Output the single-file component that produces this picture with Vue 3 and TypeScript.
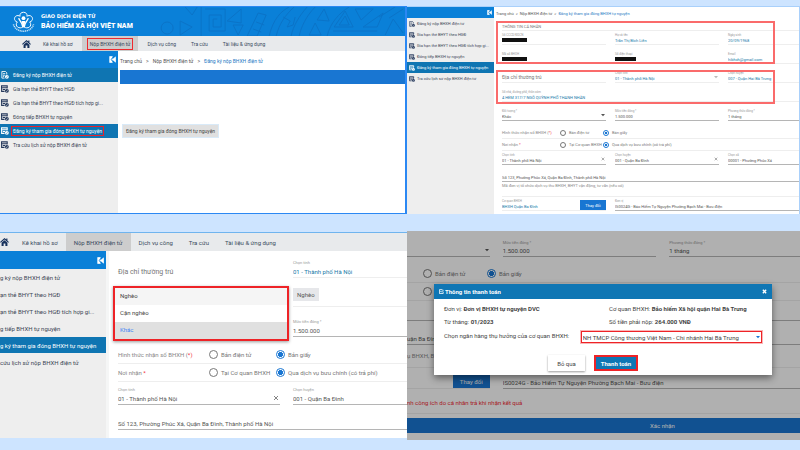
<script setup lang="ts">
import { reactive } from 'vue'

type Kind = 'heading' | 'input' | 'select' | 'redacted' | 'note' | 'warn' | 'chip' | 'office' | 'radios' | 'blank'

interface Cell {
  kind: Kind
  label?: string
  value?: string
  tone?: string
  wide?: boolean
  mark?: string
  options?: string[]
}

interface Row {
  size: string
  cells: Cell[]
}

interface Panel {
  id: string
  banner?: boolean
  nav?: boolean
  side?: string[]
  active?: number[]
  crumbs?: string[]
  sections: Row[][]
}

const menu = ['Kê khai hồ sơ', 'Nộp BHXH điện tử', 'Dịch vụ công', 'Tra cứu', 'Tài liệu & ứng dụng']
const sideItems = [
  'Đăng ký nộp BHXH điện tử',
  'Gia hạn thẻ BHYT theo HGĐ',
  'Gia hạn thẻ BHYT theo HGĐ tích hợp gi...',
  'Đóng tiếp BHXH tự nguyện',
  'Đăng ký tham gia đóng BHXH tự nguyện',
  'Tra cứu lịch sử nộp BHXH điện tử',
]
const sideItemsCropped = [
  'g ký nộp BHXH điện tử',
  'ạn thẻ BHYT theo HGĐ',
  'ạn thẻ BHYT theo HGĐ tích hợp gi...',
  'g tiếp BHXH tự nguyện',
  'g ký tham gia đóng BHXH tự nguyện',
  'cứu lịch sử nộp BHXH điện tử',
]

const receive: Cell = { kind: 'radios', label: 'Hình thức nhận sổ BHXH (', mark: '*)', options: ['Bản điện tử', 'Bản giấy'] }
const place: Cell = { kind: 'radios', label: 'Nơi nhận ', mark: '*', options: ['Tại Cơ quan BHXH', 'Qua dịch vụ bưu chính (có trả phí)'] }

const panels = reactive<Panel[]>([
  {
    id: 'start',
    banner: true,
    nav: true,
    side: sideItems,
    active: [0, 4],
    crumbs: ['Trang chủ', 'Nộp BHXH điện tử', 'Đăng ký nộp BHXH điện tử'],
    sections: [],
  },
  {
    id: 'form',
    side: sideItems,
    active: [4],
    crumbs: ['Trang chủ', 'Nộp BHXH điện tử', 'Đăng ký tham gia đóng BHXH tự nguyện'],
    sections: [
      [
        { size: 'head', cells: [{ kind: 'heading', value: 'THÔNG TIN CÁ NHÂN', wide: true }] },
        {
          size: 'short',
          cells: [
            { kind: 'redacted', label: 'Số CCCD/ĐDCN' },
            { kind: 'input', label: 'Họ và tên', value: 'Trần Thị Bích Liên', tone: 'blue' },
            { kind: 'input', label: 'Ngày sinh', value: '20/09/1968', tone: 'blue' },
          ],
        },
        {
          size: 'field',
          cells: [
            { kind: 'redacted', label: 'Mã số BHXH' },
            { kind: 'redacted', label: 'Số điện thoại' },
            { kind: 'input', label: 'Email', value: 'hibhxh@gmail.com', tone: 'blue' },
          ],
        },
      ],
      [
        {
          size: 'field',
          cells: [
            { kind: 'heading', value: 'Địa chỉ thường trú' },
            { kind: 'select', label: 'Chọn tỉnh', value: '01 - Thành phố Hà Nội', tone: 'blue faint' },
            { kind: 'input', label: 'Chọn huyện', value: '007 - Quận Hai Bà Trưng', tone: 'blue' },
          ],
        },
        {
          size: 'field',
          cells: [{ kind: 'input', label: 'Số nhà, đường phố, thôn xóm', value: '4 HẺM 317/7 NGÕ QUỲNH PHỐ THANH NHÀN', tone: 'blue', wide: true }],
        },
      ],
      [
        {
          size: 'field',
          cells: [
            { kind: 'select', label: 'Đối tượng *', value: 'Khác', tone: 'solid' },
            { kind: 'input', label: 'Mức tiền đóng *', value: '1.500.000', tone: 'solid' },
            { kind: 'input', label: 'Phương thức đóng *', value: '1 tháng', tone: 'solid' },
          ],
        },
        { size: 'pick-first', cells: [{ ...receive, wide: true }] },
        { size: 'pick', cells: [{ ...place, wide: true }] },
        {
          size: 'short',
          cells: [
            { kind: 'select', label: 'Chọn tỉnh', value: '01 - Thành phố Hà Nội', tone: 'solid cross' },
            { kind: 'select', label: 'Chọn huyện', value: '001 - Quận Ba Đình', tone: 'solid cross' },
            { kind: 'input', label: 'Chọn xã', value: '00001 - Phường Phúc Xá', tone: 'solid' },
          ],
        },
        { size: 'address', cells: [{ kind: 'input', value: 'Số 123, Phường Phúc Xá, Quận Ba Đình, Thành phố Hà Nội', tone: 'solid', wide: true }] },
        { size: 'note', cells: [{ kind: 'note', value: 'Mã đơn vị tổ chức dịch vụ thu BHXH, BHYT vận động, tư vấn (nếu có)', wide: true }] },
        {
          size: 'short',
          cells: [
            { kind: 'office', label: 'Cơ quan BHXH', value: 'BHXH Quận Ba Đình', tone: 'blue' },
            { kind: 'input', label: 'Đơn vị', value: 'IS0024G - Bảo Hiểm Tự Nguyện Phường Bạch Mai - Bưu điện', tone: 'solid', wide: true },
          ],
        },
      ],
    ],
  },
  {
    id: 'choice',
    nav: true,
    side: sideItemsCropped,
    active: [4],
    sections: [
      [
        {
          size: 'top',
          cells: [
            { kind: 'heading', value: 'Địa chỉ thường trú' },
            { kind: 'input', label: 'Chọn tỉnh', value: '01 - Thành phố Hà Nội', tone: 'blue' },
          ],
        },
        { size: 'tag', cells: [{ kind: 'blank' }, { kind: 'chip', value: 'Nghèo' }] },
        { size: 'money', cells: [{ kind: 'blank' }, { kind: 'input', label: 'Mức tiền đóng *', value: '1.500.000', tone: 'solid' }] },
        { size: 'pick-first', cells: [{ ...receive, wide: true }] },
        { size: 'pick', cells: [{ ...place, wide: true }] },
        {
          size: 'field',
          cells: [
            { kind: 'select', label: 'Chọn tỉnh', value: '01 - Thành phố Hà Nội', tone: 'solid cross' },
            { kind: 'input', label: 'Chọn huyện', value: '001 - Quận Ba Đình', tone: 'solid' },
          ],
        },
        { size: 'address', cells: [{ kind: 'input', value: 'Số 123, Phường Phúc Xá, Quận Ba Đình, Thành phố Hà Nội', tone: 'solid', wide: true }] },
      ],
    ],
  },
  {
    id: 'payment',
    sections: [
      [
        {
          size: 'top',
          cells: [
            { kind: 'select', value: '', tone: 'solid' },
            { kind: 'input', label: 'Mức tiền đóng *', value: '1.500.000', tone: 'solid' },
            { kind: 'input', label: 'Phương thức đóng *', value: '1 tháng', tone: 'solid' },
          ],
        },
        { size: 'pick-first', cells: [{ kind: 'radios', options: ['Bản điện tử', 'Bản giấy'], wide: true }] },
        { size: 'pick', cells: [{ kind: 'radios', options: [''], wide: true }] },
        { size: 'field', cells: [{ kind: 'blank', tone: 'solid' }, { kind: 'blank', tone: 'solid' }, { kind: 'blank', tone: 'solid' }] },
        { size: 'address', cells: [{ kind: 'input', value: 'uận Ba Đình', tone: 'solid', wide: true }] },
        { size: 'note', cells: [{ kind: 'note', value: 'ụ BHXH, BHYT', wide: true }] },
        {
          size: 'office-row',
          cells: [
            { kind: 'office' },
            { kind: 'input', value: 'IS0024G - Bảo Hiểm Tự Nguyện Phường Bạch Mai - Bưu điện', tone: 'solid', wide: true },
          ],
        },
        { size: 'warning', cells: [{ kind: 'warn', value: 'nh công ích do cá nhân trả khi nhận kết quả', wide: true }] },
      ],
    ],
  },
])

const objects = ['Nghèo', 'Cận nghèo', 'Khác']
const key = (...parts: (string | number)[]) => parts.join('-')
const checked = (options: string[], i: number) => i === 1 && options.length > 1
</script>

<template>
  <main class="board">
    <section v-for="p in panels" :key="p.id" class="panel" :class="p.id">
      <header v-if="p.banner" class="banner">
        <svg class="logo" viewBox="0 0 24 24" aria-hidden="true">
          <g fill="none" stroke="#fff" stroke-width="1">
            <path d="M8.500 6.500C7 1 17 1 15.500 6.500C21 3.500 24 11 18.500 12.500C22 17 16 20.500 12.500 17.500H11.500C8 20.500 2 17 5.500 12.500C0 11 3 3.500 8.500 6.500Z" />
            <path d="M7 8.500C8 12 10.500 12 11.300 18M17 8.500C16 12 13.500 12 12.700 18" stroke-width="1.400" />
            <path d="M1.500 15C4 24.500 20 24.500 22.500 15" stroke-dasharray="1.200 .7" stroke-width="1.600" opacity=".8" />
          </g>
          <circle cx="12" cy="8.500" r="2" fill="#fff" />
          <path d="M10 11.500h4l-1.300 6h-1.400z" fill="#fff" />
        </svg>
        <div class="brand">
          <span class="brand-sub">GIAO DỊCH ĐIỆN TỬ</span>
          <h1>BẢO HIỂM XÃ HỘI VIỆT NAM</h1>
        </div>
        <svg class="pattern" viewBox="0 0 256 29" preserveAspectRatio="xMaxYMid slice" aria-hidden="true">
          <g fill="none" stroke="#0a6cbe" stroke-width="1" opacity=".6">
            <circle cx="18" cy="21" r="6" />
            <path d="M31 14l12 6-12 8zM36 0l7 8 5-8M52 0v29M56 2h20v22H60V8h12v12h-8v-8h4" />
            <path d="M78 14l14-12v14zM84 18h10l-5 10zM98 29L109 6l8 2-9 21zM104 22l8 3M107 15l8 3" />
            <path d="M120 29C124 12 132 4 140 0M127 29c3-12 9-21 18-29M134 10l7 4-3 6 6-2 2-8M142 29c2-10 8-20 16-29M150 29c2-9 7-20 16-29" />
            <path d="M160 28l6-12 6 12zM168 13l7-11 5 12zM185 20L196 4l8 16zM190 18l6-9 4 9zM206 2h18l-12 11zM214 20h14l6-14z" />
            <path d="M178 29c3-13 12-23 22-29M184 24h44M236 28l8-16 10 14M230 10L246 0M240 11l14-9" />
          </g>
        </svg>
      </header>

      <nav v-if="p.nav" class="topnav" aria-label="Menu chính">
        <a href="#" class="home" aria-label="Trang chủ">
          <svg viewBox="0 0 10 9"><path d="M5 0L0 4.500l.8.8L5 1.600l4.200 3.700.8-.8L8.300 3V.7H7V1.800zM5 2.500L1.700 5.400V9H4V6.300h2V9h2.300V5.400z" fill="#16315c" /></svg>
        </a>
        <a v-for="(m, i) in menu" :key="m" href="#" :class="{ current: i === 1 }"><span>{{ m }}</span></a>
      </nav>

      <div class="body">
        <aside v-if="p.side" class="sidebar">
          <div class="side-top">
            <button type="button" class="collapse" aria-label="Thu gọn">
              <svg viewBox="0 0 8 8"><path d="M4 .5H.8v7H4M7.500 1L4 4l3.500 3z" fill="#fff" stroke="#fff" stroke-width=".8" /><path d="M4.200 1.500L2.600 4l1.600 2.500" fill="none" stroke="#0a80d8" stroke-width="1" /></svg>
            </button>
          </div>
          <a v-for="(s, i) in p.side" :key="s" href="#" class="side-item" :class="{ active: p.active?.includes(i) }">
            <svg v-if="p.id !== 'choice'" class="side-icon" viewBox="0 0 9 9" aria-hidden="true">
              <path v-if="i === 0" d="M1 .5h4l1.500 1.500v2M1 .5v7.500h3M2.300 3h2.500M2.300 4.800h2M2.300 6.300h1.200" fill="none" stroke="currentColor" />
              <path v-else d="M.5 1h6.500v2h-6.500zM.7 3v4.200h3.300M2 5h2.500M6.800 3v1" fill="none" stroke="currentColor" stroke-width="1.200" />
              <circle cx="6.600" cy="6.600" r="2.200" fill="currentColor" />
              <path class="tick" d="M5.600 6.600l.8.8 1.300-1.500" fill="none" stroke-width=".6" />
            </svg>
            <span>{{ s }}</span>
          </a>
        </aside>

        <div class="content">
          <nav v-if="p.crumbs" class="crumbs" aria-label="Đường dẫn">
            <template v-for="(c, i) in p.crumbs" :key="c"><i v-if="i">&gt;</i><a href="#">{{ c }}</a></template>
          </nav>

          <template v-if="p.id === 'start'">
            <div class="strip"></div>
            <button type="button" class="join">Đăng ký tham gia đóng BHXH tự nguyện</button>
          </template>

          <form v-else @submit.prevent>
            <div v-for="(rows, si) in p.sections" :key="si" class="section">
              <div v-for="(r, ri) in rows" :key="ri" class="row" :class="r.size">
                <div v-for="(c, ci) in r.cells" :key="ci" class="cell" :class="[c.kind, c.tone, { wide: c.wide }]">
                  <h2 v-if="c.kind === 'heading'">{{ c.value }}</h2>
                  <p v-else-if="c.kind === 'note' || c.kind === 'warn'">{{ c.value }}</p>
                  <button v-else-if="c.kind === 'chip'" type="button">{{ c.value }}</button>
                  <template v-else-if="c.kind === 'redacted'">
                    <span class="label">{{ c.label }}</span><span class="redaction"></span>
                  </template>
                  <template v-else-if="c.kind === 'input'">
                    <label v-if="c.label" :for="key(p.id, si, ri, ci)">{{ c.label }}</label>
                    <input :id="key(p.id, si, ri, ci)" v-model="c.value" type="text" />
                  </template>
                  <template v-else-if="c.kind === 'select'">
                    <label v-if="c.label" :for="key(p.id, si, ri, ci)">{{ c.label }}</label>
                    <select :id="key(p.id, si, ri, ci)"><option>{{ c.value }}</option></select>
                    <svg v-if="c.tone?.includes('cross')" class="caret" viewBox="0 0 6 6"><path d="M1 1l4 4M5 1L1 5" stroke="#777" stroke-width=".9" /></svg>
                    <svg v-else class="caret" viewBox="0 0 6 6"><path d="M0 1.500h6L3 4.800z" fill="#555" /></svg>
                  </template>
                  <template v-else-if="c.kind === 'office'">
                    <div v-if="c.label" class="office-text">
                      <label :for="key(p.id, si, ri, ci)">{{ c.label }}</label>
                      <input :id="key(p.id, si, ri, ci)" v-model="c.value" type="text" />
                    </div>
                    <button type="button" class="change">Thay đổi</button>
                  </template>
                  <template v-else-if="c.kind === 'radios'">
                    <span class="question">{{ c.label }}<b>{{ c.mark }}</b></span>
                    <label v-for="(o, oi) in c.options" :key="oi" class="radio">
                      <input type="radio" :name="key(p.id, ri)" :checked="checked(c.options ?? [], oi)" />
                      <span>{{ o }}</span>
                    </label>
                  </template>
                </div>
              </div>
            </div>
            <ul v-if="p.id === 'choice'" class="menu" role="listbox" aria-label="Đối tượng">
              <li v-for="o in objects" :key="o" role="option" :aria-selected="o === 'Khác'">{{ o }}</li>
            </ul>
            <button v-if="p.id === 'payment'" type="submit" class="confirm">Xác nhận</button>
          </form>
        </div>
      </div>

      <div v-if="p.id === 'payment'" class="backdrop">
        <div class="dialog" role="dialog" aria-labelledby="pay-title">
          <div class="dialog-head">
            <svg viewBox="0 0 6 6" aria-hidden="true"><path d="M5 3.200V5.500H.5V.8H4.200M1.600 2.500l1.300 1.300L5.600 1" fill="none" stroke="#fff" stroke-width="1" /></svg>
            <h2 id="pay-title">Thông tin thanh toán</h2>
            <button type="button" aria-label="Đóng"><svg viewBox="0 0 6 6"><path d="M1 1l4 4M5 1L1 5" stroke="#fff" stroke-width="1.600" /></svg></button>
          </div>
          <div class="dialog-body">
            <div class="facts">
              <p>Đơn vị: <b>Đơn vị BHXH tự nguyện DVC</b></p>
              <p>Cơ quan BHXH: <b>Bảo hiểm Xã hội quận Hai Bà Trưng</b></p>
              <p>Từ tháng: <b>01/2023</b></p>
              <p>Số tiền phải nộp: <b>264.000 VNĐ</b></p>
            </div>
            <div class="bank">
              <label for="bank">Chọn ngân hàng thụ hưởng của cơ quan BHXH:</label>
              <div class="bank-box">
                <select id="bank"><option>NH TMCP Công thương Việt Nam - Chi nhánh Hai Bà Trưng</option></select>
                <svg viewBox="0 0 6 6"><path d="M0 1.500h6L3 4.800z" fill="#1976d2" /></svg>
              </div>
            </div>
            <div class="actions">
              <button type="button" class="skip">Bỏ qua</button>
              <button type="button" class="pay">Thanh toán</button>
            </div>
          </div>
        </div>
      </div>
    </section>
  </main>
</template>

<style>
body {
  margin: 0;
  background: #cde4ff;
}
</style>

<style scoped>
* {
  box-sizing: border-box;
}
.board {
  display: grid;
  grid-template-columns: 407fr 393fr;
  row-gap: 17px;
  padding: 6px 0 10px;
  font-family: Roboto, "Liberation Sans", sans-serif;
  background: #cde4ff;
  color: #555;
}
h1, h2, p, ul {
  margin: 0;
  padding: 0;
  font-weight: 400;
  font-size: inherit;
}
a {
  color: inherit;
  text-decoration: none;
}
button, input, select {
  margin: 0;
  padding: 0;
  border: 0;
  border-radius: 0;
  font: inherit;
  color: inherit;
  background: none;
  appearance: none;
}
svg {
  display: block;
}
.panel {
  position: relative;
  display: flex;
  flex-direction: column;
  min-width: 0;
  overflow: hidden;
  background: #fff;
}
.start {
  --side: 118px;
  --side-font: 5px;
  border: solid #2b88f3;
  border-width: 1px 2px 1px 0;
  font-size: 5px;
}
.form {
  --side: 87px;
  --side-font: 4px;
  --label: 3px;
  --value: 4px;
  --label-line: 4px;
  --value-line: 7px;
  --cols: 104fr 104fr 71fr;
  --gap: 9px;
  --q: 58px;
  --first: 43px;
  --dot: 6px;
  --pick: 12px;
  border: solid #a9d0fb;
  border-width: 1px 1px 0 0;
  font-size: 4px;
}
.choice {
  --side: 106px;
  --side-font: 6px;
  --label: 4px;
  --value: 6px;
  --label-line: 6px;
  --value-line: 11px;
  --cols: 162fr 114fr;
  --gap: 13px;
  --q: 91px;
  --first: 67px;
  --dot: 9px;
  --pick: 18px;
  margin: 1px 0 2px;
  border-top: 1px solid #6fb4ee;
  font-size: 6px;
}
.payment {
  --label: 4px;
  --value: 6px;
  --label-line: 6px;
  --value-line: 10px;
  --cols: 83fr 154fr 131fr;
  --gap: 13px;
  --q: 16px;
  --first: 64px;
  --dot: 9px;
  --pick: 18px;
  font-size: 6px;
}

/* banner */
.banner {
  position: relative;
  display: flex;
  align-items: center;
  gap: 6px;
  height: 29px;
  padding-left: 12px;
  background: #0a80d8;
  color: #fff;
}
.logo {
  width: 23px;
  height: 23px;
}
.brand {
  position: relative;
  z-index: 1;
}
.brand-sub {
  display: block;
  font: 700 5px/9px "DejaVu Sans", sans-serif;
}
.brand h1 {
  font-size: 7px;
  font-weight: 900;
  line-height: 10px;
  white-space: nowrap;
}
.pattern {
  position: absolute;
  top: 0;
  right: 0;
  width: 63%;
  height: 29px;
}

/* top navigation */
.topnav {
  display: flex;
  align-items: stretch;
  height: 15px;
  background: #e8eaec;
  color: #3a4a60;
}
.topnav a {
  display: flex;
  align-items: center;
  padding: 0 7px;
  white-space: nowrap;
}
.topnav .home {
  padding: 0 5px 0 22px;
}
.home svg {
  width: 9px;
  height: 8px;
}
.topnav .current {
  background: #cdcdcd;
}
.start .topnav .current {
  margin: 0 1px 0 2px;
  padding: 0 5px;
}
.start .current span {
  padding: 2px;
  border: 1px solid #ee2a2f;
}
.start .current ~ a {
  padding: 0 7px 0 8px;
}
.choice .topnav {
  height: 18px;
}
.choice .topnav a {
  padding: 0 8px;
}
.choice .topnav .home {
  padding: 0 5px 0 0;
}

/* sidebar */
.body {
  display: flex;
  flex: 1;
  min-width: 0;
}
.sidebar {
  flex: none;
  width: var(--side);
  background: #eee;
  color: #3c4656;
  font-size: var(--side-font);
  overflow: hidden;
}
.side-top {
  display: flex;
  justify-content: flex-end;
  align-items: center;
  height: 17px;
  padding-right: 2px;
  background: #0a80d8;
}
.collapse svg {
  width: 7px;
  height: 7px;
}
.side-item {
  display: flex;
  align-items: center;
  gap: 4px;
  height: 14px;
  padding-left: 1px;
  white-space: nowrap;
}
.side-icon {
  flex: none;
  width: 8px;
  height: 8px;
  color: #26395c;
}
.tick {
  stroke: #fff;
}
.side-item.active {
  background: #0f75b2;
  color: #fff;
}
.active .side-icon {
  color: #fff;
}
.active .tick {
  stroke: #0f75b2;
}
.start .side-item:nth-child(6) span {
  margin-left: -2px;
  padding: 1px;
  border: 1px solid #e8212b;
}
.form .side-top {
  height: 11px;
}
.form .collapse svg {
  width: 5px;
  height: 5px;
}
.form .side-item {
  height: 11px;
  padding-left: 2px;
  gap: 2px;
}
.form .side-icon {
  width: 6px;
  height: 6px;
}
.choice .side-top {
  height: 18px;
}
.choice .side-item {
  height: 16px;
  margin-bottom: 1px;
  padding: 0;
}

/* content */
.content {
  flex: 1;
  min-width: 0;
}
.start .content {
  padding-left: 2px;
}
.choice .content {
  border-left: 3px solid #f5f6f6;
}
.crumbs {
  display: flex;
  gap: 4px;
  align-items: center;
  height: 19px;
  white-space: nowrap;
  color: #555;
}
.crumbs i {
  font-style: normal;
}
.crumbs a:last-child {
  color: #1f7ac4;
}
.form .crumbs {
  gap: 2px;
  height: 13px;
  padding-left: 2px;
}
.strip {
  height: 14px;
  background: #1976d2;
}
.join {
  display: block;
  height: 12px;
  margin: 41px 0 0 3px;
  padding: 0 3px;
  background: #e0e0e0;
  outline: 1px solid #d9eaf8;
  color: #444;
}

/* form rows */
form {
  position: relative;
  padding-bottom: 8px;
}
.form form {
  padding: 0 0 3px 8px;
}
.choice form {
  padding-left: 9px;
}
.payment form {
  padding-bottom: 7px;
}
.section {
  position: relative;
}
.form .section:nth-child(-n+2)::after {
  content: "";
  position: absolute;
  inset: 1px 24px 0 -6px;
  border: 2px solid #fa6b6b;
  pointer-events: none;
}
.form .section:nth-child(2)::after {
  inset: 6px 24px -2px -6px;
}
.row {
  display: grid;
  grid-template-columns: var(--cols);
  column-gap: var(--gap);
  align-items: end;
}
.cell {
  position: relative;
  display: flex;
  flex-direction: column;
  min-width: 0;
  border-bottom: 1px solid #eee;
}
.cell.solid {
  border-color: #b5b5b5;
}
.cell label, .label {
  display: block;
  height: var(--label-line);
  font-size: var(--label);
  line-height: var(--label-line);
  color: #999;
  white-space: nowrap;
}
.cell input[type="text"], .cell select {
  display: block;
  width: 100%;
  min-width: 0;
  height: var(--value-line);
  font-size: var(--value);
  line-height: var(--value-line);
}
.cell.blue input, .cell.blue select {
  color: #2079a8;
}
.cell.wide {
  grid-column: 2 / -1;
}
.cell.wide:first-child {
  grid-column: 1 / -1;
}
.cell.blank:not(.solid) {
  border: 0;
}
.caret {
  position: absolute;
  right: 1px;
  bottom: 3px;
  width: 4px;
  height: 4px;
}
.faint .caret {
  opacity: .4;
}
.cell h2 {
  height: 9px;
  font-size: 5px;
  line-height: 9px;
  color: #777;
}
.head h2 {
  height: 7px;
  font-size: 4px;
  line-height: 7px;
}
.cell p {
  color: #888;
  white-space: nowrap;
}
.cell.warn p {
  color: #f22b35;
}
.redaction {
  width: 25px;
  height: 4px;
  margin: 1px 0 2px;
  background: #111;
}
.redacted:nth-child(2) .redaction {
  width: 21px;
}
.cell.office {
  flex-direction: row;
  align-items: flex-end;
  justify-content: space-between;
}
.office-text {
  min-width: 0;
}
.change {
  flex: none;
  width: 26px;
  height: 10px;
  background: #1976d2;
  color: #fff;
}
.cell.radios {
  display: grid;
  grid-template-columns: var(--q) var(--first) 1fr;
  align-items: center;
  height: var(--pick);
  color: #888;
  white-space: nowrap;
}
.question b {
  font-weight: 400;
  color: #f22b35;
}
.cell .radio {
  display: flex;
  align-items: center;
  gap: 3px;
  height: auto;
  font-size: var(--value);
  color: #777;
}
.radio input {
  flex: none;
  width: var(--dot);
  height: var(--dot);
  border: 1px solid #777;
  border-radius: 50%;
}
.radio input:checked {
  border-color: #1976d2;
  background: radial-gradient(circle, #1976d2 45%, transparent 55%);
}

.form .head { height: 11px; }
.form .short { height: 14px; }
.form .field { height: 19px; }
.form .pick-first { height: 18px; }
.form .pick { height: 12px; }
.form .address { height: 17px; }
.form .note { height: 15px; }
.form .note p { line-height: 7px; }

.choice .top { height: 27px; }
.choice .tag { height: 29px; }
.choice .money { height: 30px; }
.choice .pick-first { height: 27px; }
.choice .pick { height: 18px; }
.choice .field { height: 23px; }
.choice .address { height: 25px; }
.choice .heading { border: 0; }
.choice h2 {
  height: 12px;
  font-size: 7px;
  line-height: 12px;
}
.chip button {
  align-self: flex-start;
  height: 13px;
  margin-bottom: 5px;
  padding: 0 4px;
  background: #e6e7ea;
}
.choice .caret {
  width: 6px;
  height: 6px;
}

.payment .top { height: 26px; }
.payment .pick-first { height: 26px; }
.payment .pick { height: 18px; }
.payment .field { height: 20px; }
.payment .address { height: 24px; }
.payment .note { height: 23px; }
.payment .note p { line-height: 22px; }
.payment .office-row { height: 21px; }
.payment .warning { height: 25px; }
.payment .warning p { line-height: 20px; }
.payment .caret { bottom: 4px; }
.payment .change {
  width: 37px;
  height: 14px;
  margin-left: auto;
}

/* option list lying over the form */
.menu {
  position: absolute;
  top: 35px;
  left: 4px;
  width: 59%;
  border: 2px solid #ee2327;
  background: #fff;
  box-shadow: 0 1px 3px #0006;
  list-style: none;
  color: #444;
}
.menu li {
  height: 17px;
  padding-left: 5px;
  line-height: 16px;
}
.menu li:first-child {
  background: #f5f5f5;
}
.menu li:last-child {
  background: #e0e0e0;
  color: #4285f4;
}
.confirm {
  display: block;
  width: 100%;
  height: 15px;
  margin-top: 4px;
  padding-left: 30%;
  background: #1976d2;
  color: #fff;
}

/* payment dialog */
.backdrop {
  position: absolute;
  inset: 0;
  background: #0000004f;
}
.dialog {
  position: absolute;
  top: 53px;
  left: 27px;
  right: 28px;
  background: #fff;
  box-shadow: 0 3px 7px #0007;
  color: #444;
}
.dialog-head {
  display: flex;
  align-items: center;
  gap: 1px;
  height: 15px;
  padding: 0 5px;
  background: #0f76b4;
  color: #fff;
}
.dialog-head svg {
  width: 5px;
  height: 5px;
}
.dialog-head h2 {
  flex: 1;
  font-weight: 700;
}
.dialog-body {
  padding: 3px 10px 4px;
}
.facts {
  display: grid;
  grid-template-columns: 165fr 153fr;
  line-height: 13px;
  white-space: nowrap;
}
.facts b {
  font-weight: 700;
}
.bank {
  display: flex;
  justify-content: space-between;
  margin-top: 3px;
  line-height: 9px;
  white-space: nowrap;
}
.bank-box {
  position: relative;
  width: 57%;
  height: 12px;
  border: 1px solid #ee2327;
  outline: 1px solid #ee232755;
}
.bank-box select {
  display: block;
  width: 100%;
  height: 10px;
  padding-left: 1px;
}
.bank-box svg {
  position: absolute;
  top: 3px;
  right: 1px;
  width: 4px;
  height: 4px;
}
.actions {
  display: flex;
  gap: 9px;
  justify-content: center;
  margin-top: 12px;
  padding-right: 20px;
}
.actions button {
  height: 16px;
}
.skip {
  width: 37px;
  box-shadow: 0 1px 2px #0006;
}
.actions .pay {
  width: 44px;
  border: 2px solid #ee2327;
  background: #0f76b4;
  color: #fff;
  font-weight: 700;
}
</style>
